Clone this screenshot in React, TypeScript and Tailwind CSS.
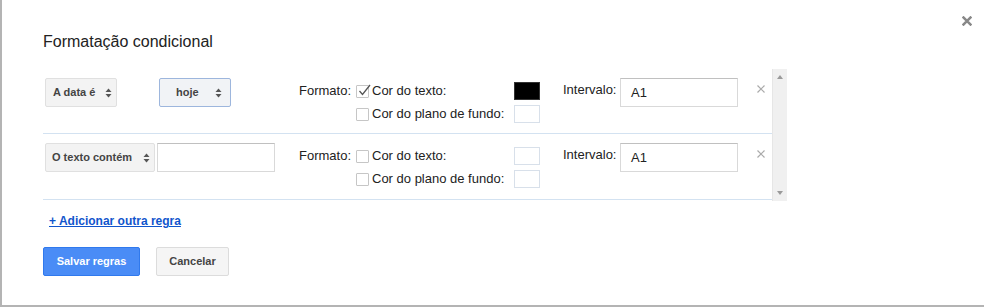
import React from "react";

const font = { fontFamily: '"Liberation Sans", Arial, sans-serif' };

function UpDown() {
  return (
    <svg width="7" height="10" viewBox="0 0 7 10" className="shrink-0">
      <path d="M3.5 0.5 L6.5 4 L0.5 4 Z" fill="#555" />
      <path d="M3.5 9.5 L6.5 6 L0.5 6 Z" fill="#555" />
    </svg>
  );
}

function SmallX({ color = "#aaa", size = 8, sw = 1.2 }: { color?: string; size?: number; sw?: number }) {
  return (
    <svg width={size} height={size} viewBox="0 0 8 8">
      <path d="M0.5 0.5 L7.5 7.5 M7.5 0.5 L0.5 7.5" stroke={color} strokeWidth={sw} fill="none" />
    </svg>
  );
}

function Checkbox({ checked }: { checked?: boolean }) {
  return (
    <div className="relative w-[13px] h-[13px] border border-[#c6c6c6] bg-white rounded-[1px] shrink-0">
      {checked && (
        <svg width="16" height="14" viewBox="0 0 16 14" className="absolute left-[0px] top-[-3px]">
          <path d="M2.5 8 L5.5 11.5 L13 2" stroke="#555" strokeWidth="1.3" fill="none" />
        </svg>
      )}
    </div>
  );
}

function Swatch({ black }: { black?: boolean }) {
  return (
    <div
      className={
        black
          ? "w-[26px] h-[18px] bg-black border border-[#333]"
          : "w-[26px] h-[18px] bg-white border border-[#d8e0ea]"
      }
    />
  );
}

function FormatBlock({ checked }: { checked?: boolean }) {
  return (
    <div className="flex mt-[4px]">
      <div className="w-[57px] h-[18px] flex items-center text-[13px] text-[#222]">Formato:</div>
      <div className="flex flex-col gap-[5px]">
        <div className="flex items-center h-[18px]">
          <Checkbox checked={checked} />
          <div className="ml-[3px] w-[142px] text-[13px] text-[#222]">Cor do texto:</div>
          <Swatch black={checked} />
        </div>
        <div className="flex items-center h-[18px]">
          <Checkbox />
          <div className="ml-[3px] w-[142px] text-[13px] text-[#222]">Cor do plano de fundo:</div>
          <Swatch />
        </div>
      </div>
    </div>
  );
}

function Interval() {
  return (
    <div className="flex items-start ml-[23px]">
      <div className="w-[57px] h-[22px] mt-[1px] flex items-center text-[13px] text-[#222]">Intervalo:</div>
      <div className="w-[118px] h-[29px] border border-[#d9d9d9] border-t-[#c0c0c0] bg-white flex items-center pl-[10px] text-[13px] text-[#222]">
        A1
      </div>
      <div className="ml-[19px] mt-[7px]">
        <SmallX />
      </div>
    </div>
  );
}

export default function App() {
  return (
    <div
      style={font}
      className="relative w-[984px] h-[307px] bg-white border-l-[2px] border-b-[2px] border-[#b4b4b4] pl-[41px] overflow-hidden"
    >
      <div className="absolute right-[12px] top-[16px]">
        <SmallX color="#888" size={10} sw={2} />
      </div>

      <div className="pt-[32px] text-[16px] leading-[20px] text-[#222]">Formatação condicional</div>

      <div className="mt-[17px] flex w-[744px]">
        <div className="flex flex-col w-[729px]">
          {/* Row 1 */}
          <div className="h-[65px] border-b border-[#d3e2f1] pl-[2px] pt-[9px] flex items-start">
            <div className="w-[254px] flex">
              <div className="w-[72px] h-[29px] bg-[#f3f3f3] border border-[#e0e0e0] rounded-[2px] flex items-center justify-between pl-[7px] pr-[4px] text-[11px] font-bold text-[#444]">
                <span>A data é</span>
                <UpDown />
              </div>
              <div className="ml-[42px] w-[72px] h-[29px] bg-[#f1f3f6] border border-[#9db6dd] rounded-[2px] flex items-center justify-between pl-[16px] pr-[8px] text-[11px] font-bold text-[#444]">
                <span>hoje</span>
                <UpDown />
              </div>
            </div>
            <FormatBlock checked />
            <Interval />
          </div>
          {/* Row 2 */}
          <div className="h-[66px] border-b border-[#d3e2f1] pl-[2px] pt-[9px] flex items-start">
            <div className="w-[254px] flex">
              <div className="w-[110px] h-[29px] bg-[#f3f3f3] border border-[#e0e0e0] rounded-[2px] flex items-center justify-between pl-[6px] pr-[4px] text-[11px] font-bold text-[#444]">
                <span>O texto contém</span>
                <UpDown />
              </div>
              <div className="ml-[2px] w-[118px] h-[29px] border border-[#d9d9d9] border-t-[#c0c0c0] bg-white" />
            </div>
            <FormatBlock />
            <Interval />
          </div>
        </div>
        <div className="w-[15px] h-[132px] bg-[#f0f0f0] border-l border-[#e6e6e6] flex flex-col items-center justify-between py-[6px]">
          <svg width="6" height="4" viewBox="0 0 6 4">
            <path d="M3 0 L6 4 L0 4 Z" fill="#9a9a9a" />
          </svg>
          <svg width="6" height="4" viewBox="0 0 6 4">
            <path d="M0 0 L6 0 L3 4 Z" fill="#9a9a9a" />
          </svg>
        </div>
      </div>

      <div className="mt-[13px] pl-[6px] text-[12px] leading-[14px] font-bold text-[#1155cc] underline">
        + Adicionar outra regra
      </div>

      <div className="mt-[19px] flex gap-[16px]">
        <div className="w-[97px] h-[29px] rounded-[2px] border border-[#3079ed] bg-[#4a8cf6] text-white text-[11px] font-bold flex items-center justify-center">
          Salvar regras
        </div>
        <div className="w-[73px] h-[29px] rounded-[2px] border border-[#dcdcdc] bg-[#f5f5f5] text-[#444] text-[11px] font-bold flex items-center justify-center">
          Cancelar
        </div>
      </div>
    </div>
  );
}
